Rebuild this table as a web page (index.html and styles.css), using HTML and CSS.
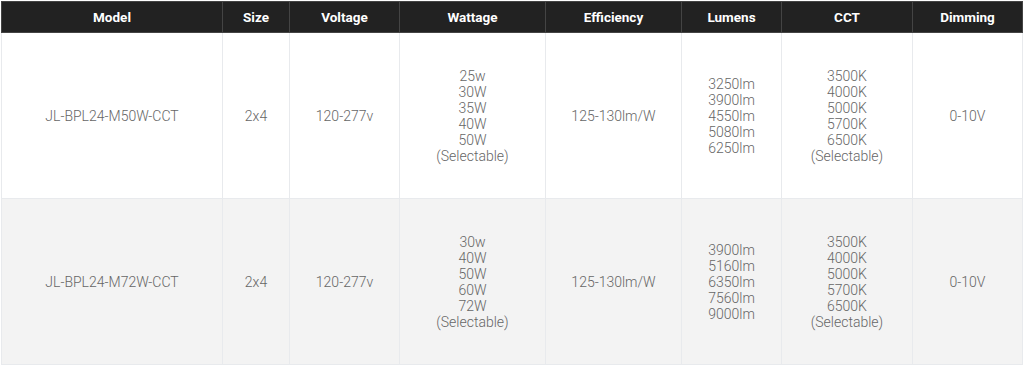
FILE: index.html
```html
<!DOCTYPE html>
<html>
<head>
<meta charset="utf-8">
<link rel="stylesheet" href="styles.css">
</head>
<body>
<div class="wrap">
<table class="spec">
<colgroup>
<col class="c1"><col class="c2"><col class="c3"><col class="c4"><col class="c5"><col class="c6"><col class="c7"><col class="c8">
</colgroup>
<thead>
<tr><th>Model</th><th>Size</th><th>Voltage</th><th>Wattage</th><th>Efficiency</th><th>Lumens</th><th>CCT</th><th>Dimming</th></tr>
</thead>
<tbody>
<tr>
<td>JL-BPL24-M50W-CCT</td><td>2x4</td><td>120-277v</td>
<td>25w<br>30W<br>35W<br>40W<br>50W<br>(Selectable)</td>
<td>125-130lm/W</td>
<td>3250lm<br>3900lm<br>4550lm<br>5080lm<br>6250lm</td>
<td>3500K<br>4000K<br>5000K<br>5700K<br>6500K<br>(Selectable)</td>
<td>0-10V</td>
</tr>
<tr class="alt">
<td>JL-BPL24-M72W-CCT</td><td>2x4</td><td>120-277v</td>
<td>30w<br>40W<br>50W<br>60W<br>72W<br>(Selectable)</td>
<td>125-130lm/W</td>
<td>3900lm<br>5160lm<br>6350lm<br>7560lm<br>9000lm</td>
<td>3500K<br>4000K<br>5000K<br>5700K<br>6500K<br>(Selectable)</td>
<td>0-10V</td>
</tr>
</tbody>
</table>
</div>
</body>
</html>
```
FILE: styles.css
```css
html, body { margin: 0; padding: 0; background: #fff; }
.wrap { padding: 1px 2px 0 1px; }
.spec {
  width: 1021px;
  border-collapse: collapse;
  table-layout: fixed;
  font-family: Roboto, "Liberation Sans", sans-serif;
  font-size: 14px;
}
.c1 { width: 221px; }
.c2 { width: 67px; }
.c3 { width: 110px; }
.c4 { width: 146px; }
.c5 { width: 136px; }
.c6 { width: 100px; }
.c7 { width: 131px; }
.c8 { width: 110px; }
.spec th {
  background: #222;
  color: #fff;
  font-weight: 700;
  font-size: 13.5px;
  height: 30px;
  padding: 0;
  border: 1px solid #444;
  text-align: center;
  vertical-align: middle;
}
.spec td {
  color: #666;
  font-weight: 300;
  line-height: 16px;
  text-align: center;
  vertical-align: middle;
  border: 1px solid #e8eaed;
  height: 165px;
  padding: 0 4px;
  background: #fff;
}
.spec tr.alt td { background: #f3f3f3; }
```
